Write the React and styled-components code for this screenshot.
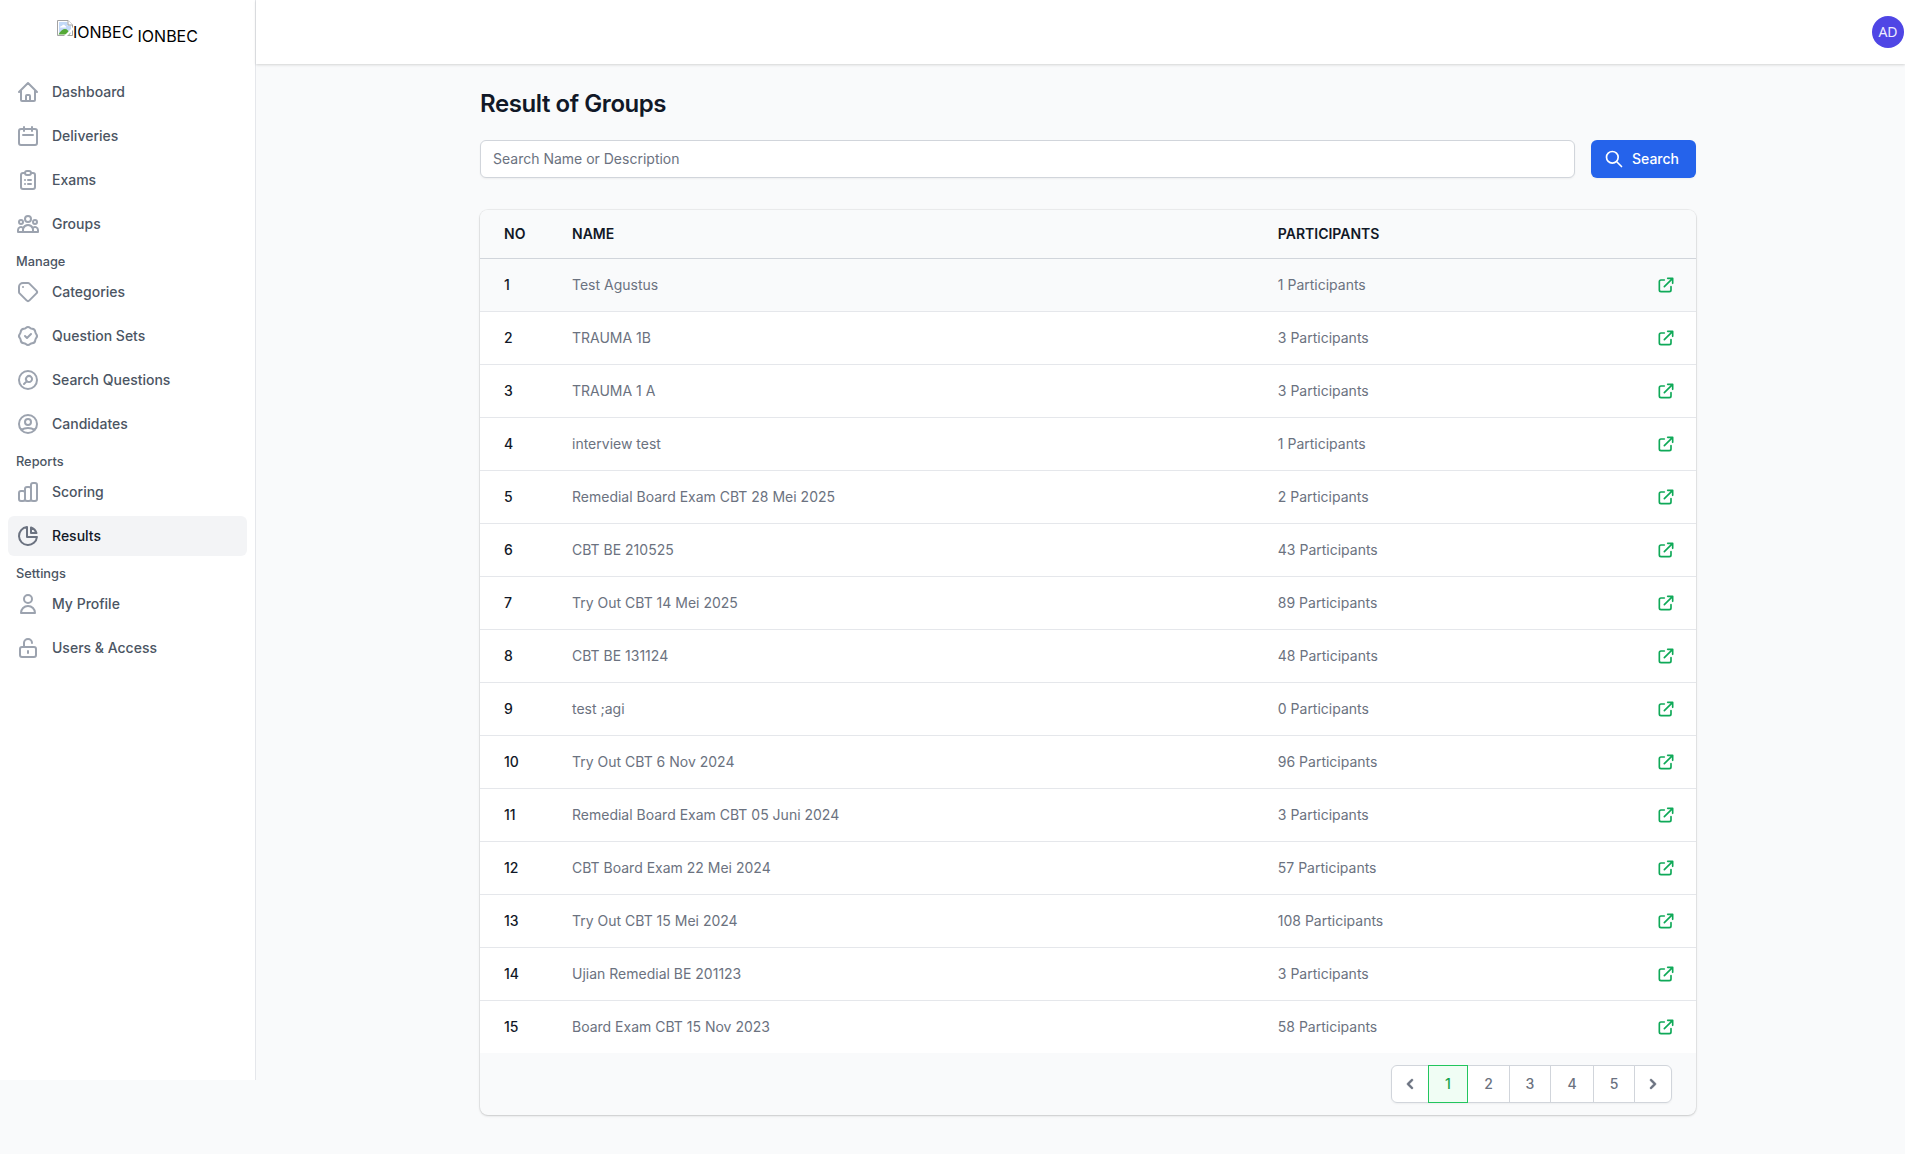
import React from "react";
import styled, { createGlobalStyle } from "styled-components";
import {
  HiOutlineHome, HiOutlineCalendar, HiOutlineClipboardList, HiOutlineUserGroup, HiOutlineTag,
  HiOutlineBadgeCheck, HiOutlineSearchCircle, HiOutlineUserCircle, HiOutlineChartBar,
  HiOutlineChartPie, HiOutlineUser, HiOutlineLockOpen, HiOutlineSearch, HiOutlineExternalLink,
  HiChevronLeft, HiChevronRight,
} from "react-icons/hi";

const Global = createGlobalStyle`
  *, *::before, *::after { box-sizing: border-box; }
  body {
    margin: 0;
    background: #f9fafb;
    color: #000;
    font-family: Inter, "Liberation Sans", sans-serif;
    font-size: 16px;
    line-height: 24px;
  }
  svg { display: block; flex-shrink: 0; }
  input, button { font: inherit; margin: 0; }
`;

const Page = styled.div`
  display: flex;
  align-items: flex-start;
  min-height: 1154px;
`;
const Sidebar = styled.aside`
  width: 256px;
  height: 1080px;
  flex-shrink: 0;
  background: #fff;
  border-right: 1px solid #e5e7eb;
`;
const Brand = styled.div`
  display: flex;
  height: 64px;
  padding: 20px 0 0 57px;
`;
const BrandImage = styled.span`
  display: flex;
  align-items: flex-start;
  height: 24px;
`;
const BrandAlt = styled.span`
  display: block;
  line-height: 24px;
`;
const BrandName = styled.span`
  margin: 4px 0 0 4.2px;
  line-height: 24px;
`;
const Nav = styled.nav`
  display: flex;
  flex-direction: column;
  gap: 4px;
  padding: 8px 8px 0;
`;
const NavItem = styled.a`
  display: flex;
  align-items: center;
  gap: 12px;
  height: 40px;
  padding: 0 8px;
  border-radius: 6px;
  font-size: 14px;
  line-height: 20px;
  font-weight: 500;
  color: ${(p) => (p.$active ? "#111827" : "#4b5563")};
  background: ${(p) => (p.$active ? "#f3f4f6" : "transparent")};
  svg { color: ${(p) => (p.$active ? "#6b7280" : "#9ca3af")}; }
`;
const Section = styled.div`
  height: 20px;
  padding: 0 8px;
  margin: 4px 0 -4px;
  font-size: 12.8px;
  line-height: 20px;
  font-weight: 500;
  color: #4b5563;
`;
const Content = styled.div`
  flex: 1;
  min-width: 0;
`;
const TopBar = styled.header`
  display: flex;
  justify-content: flex-end;
  align-items: center;
  height: 64px;
  padding-right: 1px;
  background: #fff;
  box-shadow: 0 1px 3px rgba(0, 0, 0, 0.1), 0 1px 2px rgba(0, 0, 0, 0.06);
`;
const Avatar = styled.div`
  display: grid;
  place-items: center;
  width: 32px;
  height: 32px;
  border-radius: 50%;
  background: #4f46e5;
  color: #eeedff;
  font-size: 14px;
  line-height: 16px;
  font-family: "Noto Sans", sans-serif;
  font-weight: 400;
`;
const Main = styled.main`
  width: 1216px;
  margin: 0 0 0 224px;
  padding-top: 24px;
`;
const Title = styled.h1`
  margin: 0 0 20px;
  font-size: 24px;
  line-height: 32px;
  font-weight: 600;
  letter-spacing: -0.43px;
  color: #111827;
`;
const SearchRow = styled.form`
  display: flex;
  gap: 16px;
  margin-bottom: 32px;
`;
const SearchInput = styled.input`
  flex: 1;
  height: 38px;
  padding: 7px 12px 9px;
  border: 1px solid #d1d5db;
  border-radius: 6px;
  background: #fff;
  box-shadow: 0 1px 2px rgba(0, 0, 0, 0.05);
  font-size: 14px;
  line-height: 20px;
  outline: none;
  &::placeholder { color: #6b7280; opacity: 1; }
`;
const SearchButton = styled.button`
  display: flex;
  align-items: center;
  gap: 8px;
  width: 105px;
  height: 38px;
  padding: 0 0 0 13px;
  border: 0;
  border-radius: 6px;
  background: #2563eb;
  color: #fff;
  box-shadow: 0 1px 2px rgba(0, 0, 0, 0.05);
  font-size: 14px;
  font-weight: 500;
`;
const Card = styled.section`
  overflow: hidden;
  border-radius: 8px;
  background: #f9fafb;
  box-shadow: 0 0 0 1px rgba(0, 0, 0, 0.05), 0 1px 3px rgba(0, 0, 0, 0.1), 0 1px 2px rgba(0, 0, 0, 0.06);
`;
const Row = styled.div`
  display: grid;
  grid-template-columns: 68px 705.8px 1fr 20px;
  align-items: center;
  height: 53px;
  padding: 0 20px 0 24px;
  border-top: 1px solid #e5e7eb;
  background: ${(p) => (p.$shaded ? "#f9fafb" : "#fff")};
  font-size: 14px;
  line-height: 20px;
  color: #6b7280;
  svg { color: #0fa958; }
`;
const HeadRow = styled(Row)`
  height: 49px;
  border-top: 0;
  border-bottom: 1px solid #d1d5db;
  background: #f9fafb;
  font-weight: 600;
  color: #111827;
  & + div { border-top: 0; height: 52px; }
`;
const RowNumber = styled.span`
  font-weight: 500;
  color: #111827;
`;
const Footer = styled.footer`
  display: flex;
  justify-content: flex-end;
  height: 62px;
  padding: 12px 24px 0;
`;
const Pagination = styled.div`
  display: flex;
  height: 38px;
  border-radius: 6px;
  box-shadow: 0 1px 2px rgba(0, 0, 0, 0.05);
`;
const PageLink = styled.a`
  display: flex;
  align-items: center;
  justify-content: center;
  position: relative;
  z-index: ${(p) => (p.$active ? 1 : 0)};
  width: ${(p) => p.$w}px;
  margin-left: -1px;
  border: 1px solid ${(p) => (p.$active ? "#22c55e" : "#d1d5db")};
  background: ${(p) => (p.$active ? "#f0fdf4" : "#fff")};
  color: ${(p) => (p.$active ? "#16a34a" : "#6b7280")};
  font-size: 14px;
  font-weight: 500;
  svg { stroke: currentColor; stroke-width: 0.5; }
  &:first-child { border-radius: 6px 0 0 6px; margin-left: 0; }
  &:last-child { border-radius: 0 6px 6px 0; }
`;

const MAIN = [["Dashboard", HiOutlineHome], ["Deliveries", HiOutlineCalendar], ["Exams", HiOutlineClipboardList], ["Groups", HiOutlineUserGroup]];
const GROUPS = [
  ["Manage", [["Categories", HiOutlineTag], ["Question Sets", HiOutlineBadgeCheck], ["Search Questions", HiOutlineSearchCircle], ["Candidates", HiOutlineUserCircle]]],
  ["Reports", [["Scoring", HiOutlineChartBar], ["Results", HiOutlineChartPie]]],
  ["Settings", [["My Profile", HiOutlineUser], ["Users & Access", HiOutlineLockOpen]]],
];
const ROWS = [
  ["Test Agustus", 1], ["TRAUMA 1B", 3], ["TRAUMA 1 A", 3], ["interview test", 1],
  ["Remedial Board Exam CBT 28 Mei 2025", 2], ["CBT BE 210525", 43], ["Try Out CBT 14 Mei 2025", 89],
  ["CBT BE 131124", 48], ["test ;agi", 0], ["Try Out CBT 6 Nov 2024", 96],
  ["Remedial Board Exam CBT 05 Juni 2024", 3], ["CBT Board Exam 22 Mei 2024", 57],
  ["Try Out CBT 15 Mei 2024", 108], ["Ujian Remedial BE 201123", 3], ["Board Exam CBT 15 Nov 2023", 58],
];
const PAGES = [[1, 40], [2, 43], [3, 42], [4, 44], [5, 42]];

function NavLinks({ items }) {
  return items.map(([label, Icon]) => (
    <NavItem key={label} $active={label === "Results"}>
      <Icon size={24} />
      {label}
    </NavItem>
  ));
}

function BrokenImageIcon() {
  return (
    <svg width="16" height="16" viewBox="0 0 16 16">
      <path d="M.5 .5H11L15.500 5V15.500H.5Z" fill="#fff" stroke="#a3a3a3" />
      <path d="M2 2H10.500V5.500H14V14H2Z" fill="#c3d9f7" />
      <path d="M3 7.500C3 6 4.500 6 5 6C5.500 4 8 4.500 8 6C9.500 6 9.500 7.500 9 7.500Z" fill="#fff" />
      <path d="M1.500 14.500C3 11 6 9 8 9C10 9 12 11 13 14.500Z" fill="#54a936" />
      <path d="M16 7L7 16H10L16 10Z" fill="#fff" />
      <path d="M11 .5V5H15.500" fill="#fff" stroke="#a3a3a3" />
    </svg>
  );
}

export default function App() {
  return (
    <>
      <Global />
      <Page>
        <Sidebar>
          <Brand>
            <BrandImage><BrokenImageIcon /><BrandAlt>IONBEC</BrandAlt></BrandImage>
            <BrandName>IONBEC</BrandName>
          </Brand>
          <Nav>
            <NavLinks items={MAIN} />
            {GROUPS.map(([title, items]) => (
              <React.Fragment key={title}>
                <Section>{title}</Section>
                <NavLinks items={items} />
              </React.Fragment>
            ))}
          </Nav>
        </Sidebar>
        <Content>
          <TopBar><Avatar>AD</Avatar></TopBar>
          <Main>
            <Title>Result of Groups</Title>
            <SearchRow>
              <SearchInput placeholder="Search Name or Description" />
              <SearchButton type="button"><HiOutlineSearch size={20} />Search</SearchButton>
            </SearchRow>
            <Card>
              <HeadRow><span>NO</span><span>NAME</span><span>PARTICIPANTS</span></HeadRow>
              {ROWS.map(([name, count], i) => (
                <Row key={name} $shaded={i === 0}>
                  <RowNumber>{i + 1}</RowNumber>
                  <span>{name}</span>
                  <span>{count} Participants</span>
                  <HiOutlineExternalLink size={20} />
                </Row>
              ))}
              <Footer>
                <Pagination>
                  <PageLink $w={38}><HiChevronLeft size={20} /></PageLink>
                  {PAGES.map(([n, w]) => <PageLink key={n} $w={w} $active={n === 1}>{n}</PageLink>)}
                  <PageLink $w={38}><HiChevronRight size={20} /></PageLink>
                </Pagination>
              </Footer>
            </Card>
          </Main>
        </Content>
      </Page>
    </>
  );
}
